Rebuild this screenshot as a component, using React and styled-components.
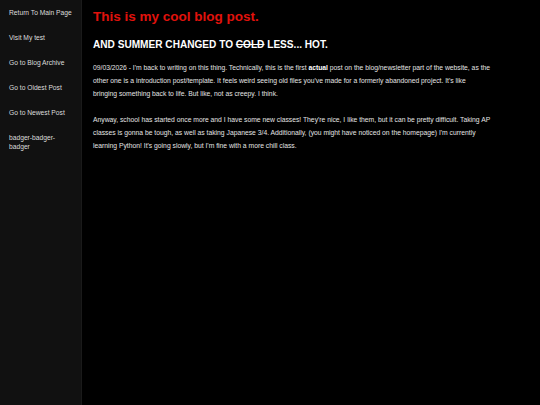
import styled, { createGlobalStyle } from 'styled-components';

const GlobalStyle = createGlobalStyle`
  html, body {
    margin: 0;
    padding: 0;
    background: #000;
  }
  body {
    font-family: 'Liberation Sans', Arial, sans-serif;
  }
`;

const Page = styled.div`
  display: flex;
  min-height: 405px;
  background: #000;
`;

const Sidebar = styled.nav`
  width: 82px;
  flex-shrink: 0;
  background: #111;
  border-right: 1px solid #1a1a1a;
  padding: 8px 8px 8px 9px;
  box-sizing: border-box;
  display: flex;
  flex-direction: column;
  gap: 16px;
`;

const NavLink = styled.a`
  color: #ddd;
  font-size: 6.7px;
  line-height: 9px;
  text-decoration: none;
`;

const Main = styled.main`
  flex: 1;
  padding: 9px 49.8px 0 11px;
  color: #ddd;
`;

const Title = styled.h1`
  color: #e0120c;
  font-size: 13.5px;
  font-weight: bold;
  margin: 0 0 15px;
`;

const Subtitle = styled.h2`
  color: #fff;
  font-size: 10.1px;
  font-weight: bold;
  margin: 0 0 11px;
  text-transform: uppercase;
`;

const Paragraph = styled.p`
  font-size: 6.78px;
  line-height: 13px;
  margin: 0 0 13px;
  color: #e4e4e4;

  b {
    color: #fff;
  }
`;

const links = [
  'Return To Main Page',
  'Visit My test',
  'Go to Blog Archive',
  'Go to Oldest Post',
  'Go to Newest Post',
  'badger-badger-badger',
];

export default function App() {
  return (
    <>
      <GlobalStyle />
      <Page>
        <Sidebar>
          {links.map(link => (
            <NavLink key={link} href="#">{link}</NavLink>
          ))}
        </Sidebar>
        <Main>
          <Title>This is my cool blog post.</Title>
          <Subtitle>And summer changed to <s>cold</s> less... hot.</Subtitle>
          <Paragraph>
            09/03/2026 - I'm back to writing on this thing. Technically, this is the first <b>actual</b> post on the blog/newsletter part of the website, as the other one is a introduction post/template. It feels weird seeing old files you've made for a formerly abandoned project. It's like bringing something back to life. But like, not as creepy. I think.
          </Paragraph>
          <Paragraph>
            Anyway, school has started once more and I have some new classes! They're nice, I like them, but it can be pretty difficult. Taking AP classes is gonna be tough, as well as taking Japanese 3/4. Additionally, (you might have noticed on the homepage) I'm currently learning Python! It's going slowly, but I'm fine with a more chill class.
          </Paragraph>
        </Main>
      </Page>
    </>
  );
}
